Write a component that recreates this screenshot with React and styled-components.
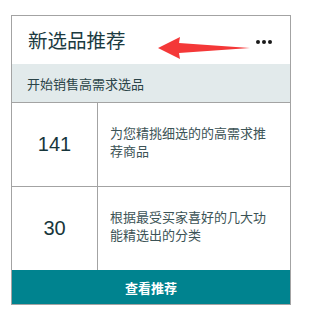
import React from "react";
import styled, { createGlobalStyle } from "styled-components";

const Global = createGlobalStyle`
  html, body { margin: 0; padding: 0; background: #ffffff; }
  body { font-family: "Noto Sans CJK SC", "Liberation Sans", sans-serif; }
`;

const Page = styled.div`
  padding: 15px 0 0 11px;
`;

const Card = styled.div`
  width: 280px;
  box-sizing: border-box;
  border: 1px solid #a3a3a3;
  display: flex;
  flex-direction: column;
  background: #fff;
`;

const Header = styled.div`
  position: relative;
  height: 48px;
  display: flex;
  align-items: center;
  justify-content: space-between;
  padding: 0 18px 0 16px;
`;

const Title = styled.h2`
  margin: 0;
  font-weight: 400;
  font-size: 19.5px;
  line-height: 1;
  color: #1b3a3f;
  font-family: "Noto Sans CJK SC", sans-serif;
`;

const Dots = styled.div`
  display: flex;
  gap: 2px;
  margin-top: 4px;
`;

const Dot = styled.span`
  width: 4px;
  height: 4px;
  border-radius: 50%;
  background: #1a1a1a;
`;

const Arrow = styled.svg`
  position: absolute;
  left: 146px;
  top: 20px;
`;

const Sub = styled.div`
  height: 38px;
  background: #e2eaeb;
  display: flex;
  align-items: center;
  padding-left: 15px;
  font-size: 13px;
  color: #2a4347;
`;

const Row = styled.div`
  display: flex;
  height: 84px;
  box-sizing: border-box;
  border-top: 1px solid #a3a3a3;
`;

const NumCell = styled.div`
  width: 85px;
  border-right: 1px solid #a3a3a3;
  display: flex;
  align-items: center;
  justify-content: center;
  font-family: "Liberation Sans", sans-serif;
  font-size: 20px;
  color: #17363b;
`;

const Desc = styled.div`
  flex: 1;
  padding: 21px 18px 0 12px;
  font-size: 13px;
  line-height: 18px;
  color: #3c5356;
`;

const Button = styled.button`
  height: 34px;
  border: none;
  margin: 0;
  background: #00838f;
  color: #fff;
  font-family: "Noto Sans CJK SC", sans-serif;
  font-weight: 700;
  font-size: 13px;
  cursor: pointer;
`;

const rows = [
  { n: 141, text: "为您精挑细选的的高需求推荐商品" },
  { n: 30, text: "根据最受买家喜好的几大功能精选出的分类" },
];

export default function App() {
  return (
    <>
      <Global />
      <Page>
        <Card>
          <Header>
            <Title>新选品推荐</Title>
            <Dots>
              <Dot />
              <Dot />
              <Dot />
            </Dots>
            <Arrow width="94" height="24" viewBox="0 0 94 24">
              <polygon
                points="0,12 22,1 21,7 92,12 21,17 22,23"
                fill="#f43838"
              />
            </Arrow>
          </Header>
          <Sub>开始销售高需求选品</Sub>
          {rows.map((r) => (
            <Row key={r.n}>
              <NumCell>{r.n}</NumCell>
              <Desc>{r.text}</Desc>
            </Row>
          ))}
          <Button>查看推荐</Button>
        </Card>
      </Page>
    </>
  );
}
